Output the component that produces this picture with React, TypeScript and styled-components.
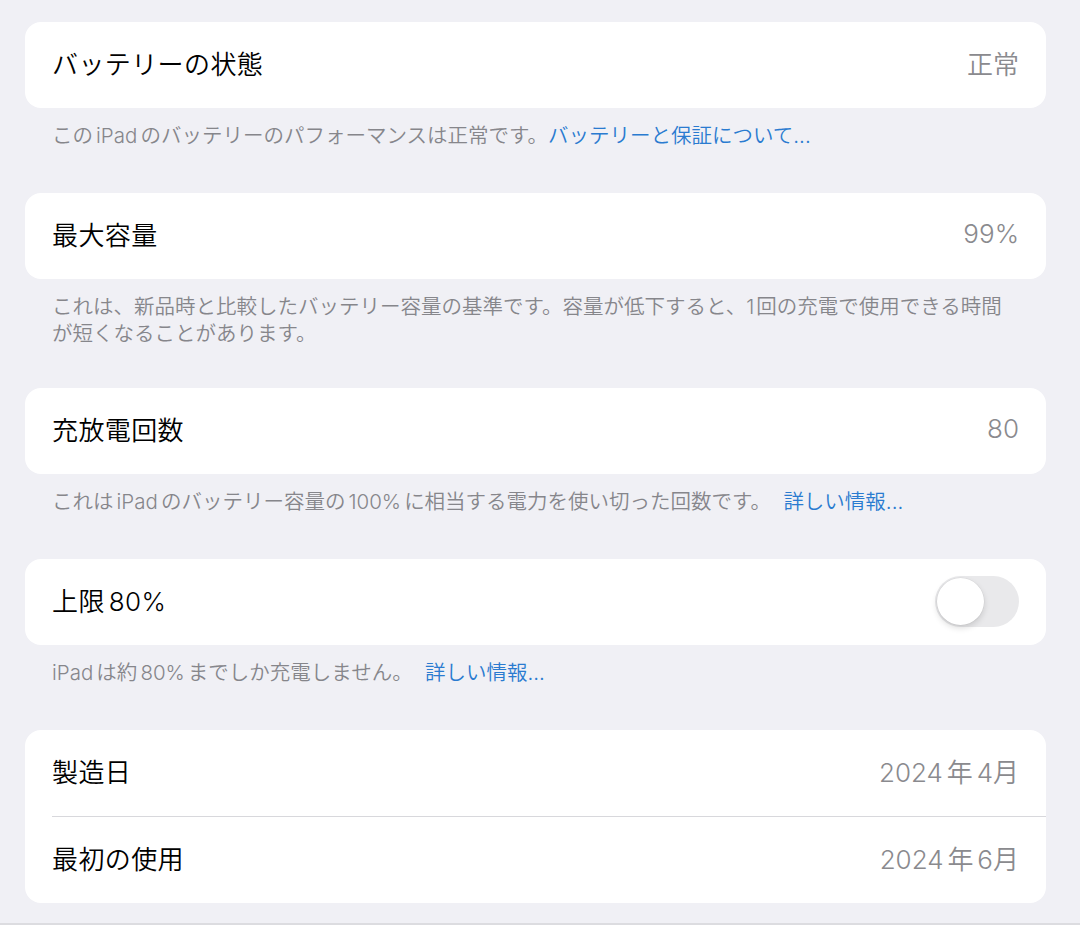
import React from 'react'
import styled, { createGlobalStyle } from 'styled-components'

const GlobalStyle = createGlobalStyle`
  html, body {
    margin: 0;
    padding: 0;
    background: #f0f0f5;
  }
  body {
    font-family: 'Inter', 'Noto Sans CJK JP', sans-serif;
    -webkit-font-smoothing: antialiased;
  }
`

const Page = styled.div`
  width: 1080px;
  height: 925px;
  box-sizing: border-box;
  padding: 22px 34px 0 25px;
  border-bottom: 2px solid #dcdce0;
  overflow: hidden;
`

const Section = styled.section<{ $gap?: number }>`
  margin-bottom: ${p => p.$gap ?? 44}px;
`

const Card = styled.div`
  background: #ffffff;
  border-radius: 16px;
  overflow: hidden;
`

const Row = styled.div`
  height: 86px;
  box-sizing: border-box;
  padding: 0 27px 5px;
  display: flex;
  align-items: center;
  justify-content: space-between;

  & + & {
    border-top: 1px solid #d8d8dc;
    margin-left: 27px;
    padding-left: 0;
    height: 87px;
  }
`

const Title = styled.span`
  font-size: 26px;
  font-weight: 350;
  color: #000000;
  letter-spacing: 0.4px;
`

const Value = styled.span`
  font-size: 26px;
  font-weight: 350;
  color: #8a8a8e;
`

const Footer = styled.p`
  margin: 14px 0 0;
  padding: 0 27px;
  font-size: 20.5px;
  font-weight: 350;
  line-height: 27px;
  color: #86868b;
`

const Link = styled.span`
  color: #2a7bd0;
`

const Space = styled.span<{ $w?: number }>`
  display: inline-block;
  width: ${p => p.$w ?? 0.15}em;
`

const Switch = styled.div<{ $on?: boolean }>`
  width: 84px;
  height: 51px;
  margin-top: 3px;
  border-radius: 26px;
  background: ${p => (p.$on ? '#34c759' : '#e9e9eb')};
  position: relative;
  flex-shrink: 0;
`

const Knob = styled.div`
  position: absolute;
  top: 2px;
  left: 2px;
  width: 47px;
  height: 47px;
  border-radius: 50%;
  background: #ffffff;
  box-shadow: 0 0 0 0.5px rgba(0, 0, 0, 0.06), 0 3px 6px rgba(0, 0, 0, 0.14);
`

export default function App() {
  return (
    <>
      <GlobalStyle />
      <Page>
        <Section>
          <Card>
            <Row>
              <Title>バッテリーの状態</Title>
              <Value>正常</Value>
            </Row>
          </Card>
          <Footer>
            この<Space />iPad<Space />のバッテリーのパフォーマンスは正常です。
            <Link>バッテリーと保証について...</Link>
          </Footer>
        </Section>

        <Section $gap={41}>
          <Card>
            <Row>
              <Title>最大容量</Title>
              <Value>99%</Value>
            </Row>
          </Card>
          <Footer>
            これは、新品時と比較したバッテリー容量の基準です。容量が低下すると、1<Space $w={0.1} />回の充電で使用できる時間
            <br />
            が短くなることがあります。
          </Footer>
        </Section>

        <Section>
          <Card>
            <Row>
              <Title>充放電回数</Title>
              <Value>80</Value>
            </Row>
          </Card>
          <Footer>
            これは<Space />iPad<Space />のバッテリー容量の<Space />100%<Space />に相当する電力を使い切った回数です。
            <Space $w={0.6} />
            <Link>詳しい情報...</Link>
          </Footer>
        </Section>

        <Section>
          <Card>
            <Row>
              <Title>
                上限<Space />80%
              </Title>
              <Switch>
                <Knob />
              </Switch>
            </Row>
          </Card>
          <Footer>
            iPad<Space />は約<Space />80%<Space />までしか充電しません。
            <Space $w={0.6} />
            <Link>詳しい情報...</Link>
          </Footer>
        </Section>

        <Section>
          <Card>
            <Row>
              <Title>製造日</Title>
              <Value>
                2024<Space />年<Space />4月
              </Value>
            </Row>
            <Row>
              <Title>最初の使用</Title>
              <Value>
                2024<Space />年<Space />6月
              </Value>
            </Row>
          </Card>
        </Section>
      </Page>
    </>
  )
}
